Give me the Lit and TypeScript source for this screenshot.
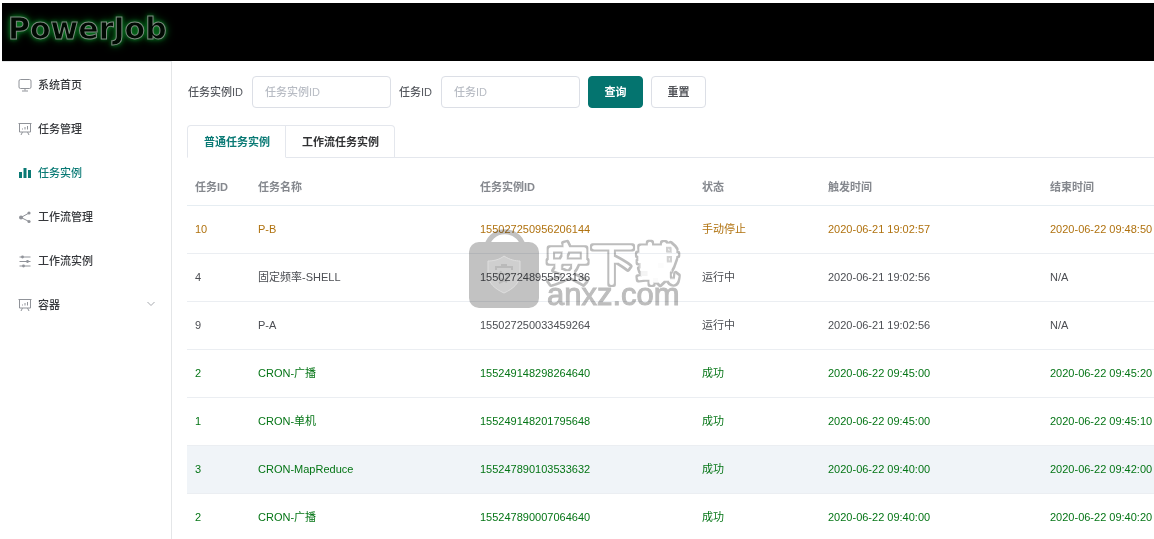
import { LitElement, html, css, svg, nothing } from "lit";
import { customElement, state } from "lit/decorators.js";
import { classMap } from "lit/directives/class-map.js";

type Row = {
  job: string;
  name: string;
  instance: string;
  status: string;
  start: string;
  end: string;
  tone: "stopped" | "running" | "success";
  active?: boolean;
};

const ROWS: Row[] = [
  { job: "10", name: "P-B", instance: "155027250956206144", status: "手动停止", start: "2020-06-21 19:02:57", end: "2020-06-22 09:48:50", tone: "stopped" },
  { job: "4", name: "固定频率-SHELL", instance: "155027248955523136", status: "运行中", start: "2020-06-21 19:02:56", end: "N/A", tone: "running" },
  { job: "9", name: "P-A", instance: "155027250033459264", status: "运行中", start: "2020-06-21 19:02:56", end: "N/A", tone: "running" },
  { job: "2", name: "CRON-广播", instance: "155249148298264640", status: "成功", start: "2020-06-22 09:45:00", end: "2020-06-22 09:45:20", tone: "success" },
  { job: "1", name: "CRON-单机", instance: "155249148201795648", status: "成功", start: "2020-06-22 09:45:00", end: "2020-06-22 09:45:10", tone: "success" },
  { job: "3", name: "CRON-MapReduce", instance: "155247890103533632", status: "成功", start: "2020-06-22 09:40:00", end: "2020-06-22 09:42:00", tone: "success", active: true },
  { job: "2", name: "CRON-广播", instance: "155247890007064640", status: "成功", start: "2020-06-22 09:40:00", end: "2020-06-22 09:40:20", tone: "success" },
];

const board = svg`
  <path d="M0.5 1.5h13M1.5 1.5v8.5h11v-8.5M4.5 10l-1.5 3M9.5 10l1.5 3" />
  <path d="M4.5 7.5v-1M7 7.5v-2.5M9.5 7.5v-3.5" />`;

const ICONS = {
  monitor: svg`<rect x="1" y="1.5" width="12" height="9" rx="1.5" /><path d="M7 10.5v2M4 13h6" />`,
  board,
  bars: svg`<g fill="currentColor" stroke="none"><rect x="1" y="6" width="3" height="6" /><rect x="5.5" y="2" width="3" height="10" /><rect x="10" y="4" width="3" height="8" /></g>`,
  share: svg`<path d="M3 7.5l8-4.5M3 7.5l8 4" /><g fill="currentColor" stroke="none"><circle cx="3" cy="7.5" r="2" /><circle cx="11" cy="3" r="1.6" /><circle cx="11" cy="11.5" r="1.6" /></g>`,
  sliders: svg`<path d="M1.5 3h11M1.5 7.5h11M1.5 12h11" /><g fill="currentColor" stroke="none"><circle cx="4.5" cy="3" r="1.4" /><circle cx="9.5" cy="7.5" r="1.4" /><circle cx="5.5" cy="12" r="1.4" /></g>`,
};

const MENU: { label: string; icon: keyof typeof ICONS; more?: boolean }[] = [
  { label: "系统首页", icon: "monitor" },
  { label: "任务管理", icon: "board" },
  { label: "任务实例", icon: "bars" },
  { label: "工作流管理", icon: "share" },
  { label: "工作流实例", icon: "sliders" },
  { label: "容器", icon: "board", more: true },
];

const TABS = ["普通任务实例", "工作流任务实例"];

@customElement("app-root")
export class AppRoot extends LitElement {
  @state() private page = "任务实例";
  @state() private tab = 0;

  static styles = css`
    :host {
      display: flex;
      flex-direction: column;
      box-sizing: border-box;
      height: 100vh;
      padding: 3px 0 0 2px;
      overflow: hidden;
      position: relative;
      background: #fff;
      color: #55585e;
      font: 500 11px/16px "Liberation Sans", "Noto Sans CJK SC", sans-serif;
    }
    * {
      box-sizing: border-box;
    }
    .header {
      flex: none;
      height: 58px;
      padding: 8px 6px;
      background: #000;
    }
    .logo {
      display: inline-block;
      font: bold 30px/36px "DejaVu Sans", sans-serif;
      color: #010a03;
      -webkit-text-stroke: 1px #7d8a80;
      text-shadow: 0 0 4px #0a8a26, 0 0 8px #0a8a26;
    }
    .body {
      flex: 1;
      display: flex;
      min-height: 0;
    }
    .side {
      flex: none;
      width: 170px;
      padding-top: 1px;
      border-top: 1px solid #e4e6e8;
      border-right: 1px solid #e4e6e8;
    }
    .item {
      display: flex;
      align-items: center;
      gap: 6px;
      height: 44px;
      padding: 0 16px;
      color: #36383c;
      text-decoration: none;
    }
    .item svg {
      flex: none;
      width: 14px;
      height: 14px;
      fill: none;
      stroke: currentColor;
      color: #909399;
    }
    .item .arrow {
      width: 8px;
      height: 8px;
      margin-left: auto;
      color: #a6a9ae;
    }
    .item.on,
    .item.on svg {
      color: #0a7a75;
    }
    .main {
      flex: 1;
      min-width: 0;
      padding: 15px 0 0 15px;
      overflow: hidden;
    }
    .search {
      display: flex;
      align-items: center;
      gap: 8px;
      margin-bottom: 17px;
      padding-left: 1px;
      white-space: nowrap;
    }
    .search label {
      padding-right: 1px;
    }
    .search input {
      width: 139px;
      height: 32px;
      padding: 0 12px;
      border: 1px solid #dcdfe6;
      border-radius: 4px;
      outline: none;
      background: #fff;
      color: #606266;
      font: inherit;
    }
    .search input::placeholder {
      color: #b8bcc4;
    }
    .search button {
      width: 55px;
      height: 32px;
      padding: 0;
      border: 1px solid #dcdfe6;
      border-radius: 4px;
      background: #fff;
      color: #505257;
      font: inherit;
      font-weight: 700;
    }
    .search .primary {
      border-color: #04746f;
      background: #04746f;
      color: #fff;
    }
    .tabs {
      display: flex;
      height: 33px;
      margin-bottom: 10px;
      border-bottom: 1px solid #e4e7ed;
    }
    .tab {
      height: 33px;
      padding: 0 15px 0 16px;
      border: 1px solid #e4e7ed;
      border-left-width: 0;
      background: #fff;
      color: #303133;
      font: inherit;
      font-weight: 700;
    }
    .tab:first-child {
      border-left-width: 1px;
      border-top-left-radius: 4px;
    }
    .tab:last-child {
      border-top-right-radius: 4px;
    }
    .tab.on {
      border-bottom-color: #fff;
      color: #0a7a75;
    }
    table {
      width: 1077px;
      min-width: 100%;
      table-layout: fixed;
      border-spacing: 0;
      text-align: left;
    }
    .c-id {
      width: 63px;
    }
    .c-status {
      width: 126px;
    }
    th {
      height: 38px;
      padding: 0 8px;
      border-bottom: 1px solid #e6edf2;
      color: #85888e;
      font-weight: 700;
    }
    td {
      height: 48px;
      padding: 0 8px 2px;
      border-bottom: 1px solid #ebeef2;
      font-weight: 400;
    }
    .running {
      color: #4c4e53;
    }
    .stopped {
      color: #b0720f;
    }
    .success {
      color: #057516;
    }
    .active {
      background: #f0f4f8;
    }
    .mark {
      position: absolute;
      left: 468px;
      top: 228px;
      width: 220px;
      height: 90px;
      pointer-events: none;
      mix-blend-mode: multiply;
    }
    .mark-cn {
      font: 400 45px "Noto Sans CJK SC", sans-serif;
    }
    .mark-en {
      font: 31px "Liberation Sans", sans-serif;
    }
  `;

  private watermark() {
    return html`<svg class="mark" viewBox="0 0 220 90" aria-hidden="true">
      <filter id="ring" x="-5%" y="-10%" width="110%" height="120%">
        <feMorphology in="SourceAlpha" operator="erode" radius="2" result="inner" />
        <feComposite in="SourceGraphic" in2="inner" operator="out" />
      </filter>
      <path d="M18 24C18 -3 56 -3 56 24" fill="none" stroke="#c2c2c2" stroke-width="5" />
      <rect x="1" y="14" width="70" height="66" rx="10" fill="#c2c2c2" />
      <path d="M36 28C42 32 48 33 52 33V46C52 55 45 61 36 65C27 61 20 55 20 46V33C25 33 31 32 36 28Z" fill="#cfcfcf" stroke="#dedede" />
      <path d="M28 42v-3h16v3M33 37h6M27 46h18M33 43l-2 7 8 4M40 47c-1 4-4 6-9 8" fill="none" stroke="#bababa" stroke-width="2" />
      <text class="mark-cn" x="77" y="53" fill="#bdbdbd" stroke="#bdbdbd" stroke-width="5" stroke-linejoin="round" filter="url(#ring)">安下载</text>
      <text class="mark-en" x="79" y="77" fill="#bdbdbd" stroke="#bdbdbd">anxz.com</text>
    </svg>`;
  }

  render() {
    return html`
      <header class="header"><span class="logo">PowerJob</span></header>
      <div class="body">
        <nav class="side">
          ${MENU.map(
            (m) => html`<a
              href="#"
              class=${classMap({ item: true, on: m.label === this.page })}
              @click=${(e: Event) => {
                e.preventDefault();
                this.page = m.label;
              }}
            >
              <svg viewBox="0 0 14 14">${ICONS[m.icon]}</svg>
              <span>${m.label}</span>
              ${m.more ? html`<svg class="arrow" viewBox="0 0 8 8"><path d="M0.5 1l3.5 3.5L7.5 1" /></svg>` : nothing}
            </a>`
          )}
        </nav>
        <main class="main">
          <form class="search" @submit=${(e: Event) => e.preventDefault()}>
            <label for="instance">任务实例ID</label>
            <input id="instance" placeholder="任务实例ID" />
            <label for="job">任务ID</label>
            <input id="job" placeholder="任务ID" />
            <button class="primary" type="submit">查询</button>
            <button type="reset">重置</button>
          </form>
          <div class="tabs" role="tablist">
            ${TABS.map(
              (t, i) => html`<button
                role="tab"
                aria-selected=${i === this.tab}
                class=${classMap({ tab: true, on: i === this.tab })}
                @click=${() => (this.tab = i)}
              >${t}</button>`
            )}
          </div>
          <table>
            <colgroup>
              <col class="c-id" /><col /><col /><col class="c-status" /><col /><col />
            </colgroup>
            <thead>
              <tr>
                <th>任务ID</th>
                <th>任务名称</th>
                <th>任务实例ID</th>
                <th>状态</th>
                <th>触发时间</th>
                <th>结束时间</th>
              </tr>
            </thead>
            <tbody>
              ${ROWS.map(
                (r) => html`<tr class=${classMap({ [r.tone]: true, active: !!r.active })}>
                  <td>${r.job}</td>
                  <td>${r.name}</td>
                  <td>${r.instance}</td>
                  <td>${r.status}</td>
                  <td>${r.start}</td>
                  <td>${r.end}</td>
                </tr>`
              )}
            </tbody>
          </table>
        </main>
      </div>
      ${this.watermark()}
    `;
  }
}
